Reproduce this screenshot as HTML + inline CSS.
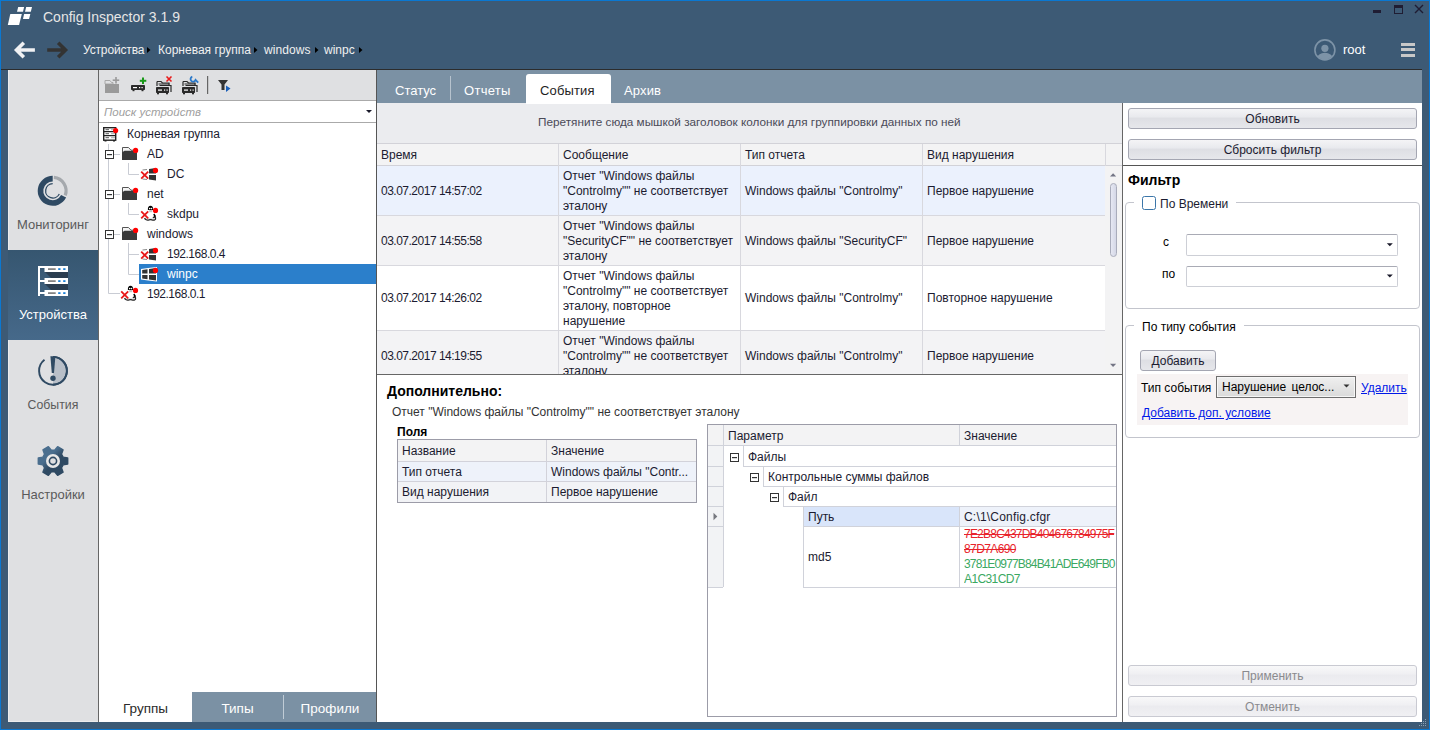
<!DOCTYPE html>
<html><head><meta charset="utf-8">
<style>
*{box-sizing:border-box;margin:0;padding:0}
html,body{width:1430px;height:730px;overflow:hidden}
body{position:relative;background:#3d5a75;font-family:"Liberation Sans",sans-serif;font-size:12px;color:#1e1e1e}
.a{position:absolute}
.t{position:absolute;white-space:nowrap;line-height:15px}
svg{position:absolute;overflow:visible}
</style></head><body>
<!-- window border -->
<div class="a" style="left:0;top:0;width:1430px;height:730px;border:1px solid #0a78d2;z-index:50"></div>

<!-- ========== TITLE BAR ========== -->
<svg style="left:0;top:0" width="40" height="30">
<polygon fill="#fff" points="7.8,25 19.1,25 21.8,14.1 10.3,14.1"/>
<polygon fill="#fff" points="23,18.9 29.1,18.9 30.3,14.1 24.1,14.1"/>
<polygon fill="#fff" points="17,11.8 23,11.8 24.1,7 18.2,7"/>
<polygon fill="#fff" points="25,11.8 30.8,11.8 32,7 26.2,7"/>
</svg>
<div class="t" style="left:43px;top:9px;font-size:14px;color:#e6e6e6;line-height:17px">Config Inspector 3.1.9</div>
<!-- window controls -->
<div class="a" style="left:1373px;top:10px;width:8px;height:3px;background:#1f1d33"></div>
<div class="a" style="left:1394px;top:5px;width:9px;height:9px;border:1px solid #1f1d33;border-top-width:3px"></div>
<svg style="left:1412px;top:3px" width="14" height="14"><path d="M3,2 L11,10 M11,2 L3,10" stroke="#1f1d33" stroke-width="1.4"/></svg>

<!-- nav arrows -->
<svg style="left:0;top:34px" width="80" height="32">
<path d="M34.9,16 H17 M23.8,8.7 L16.5,16 L23.8,23.3" fill="none" stroke="#f0f1f3" stroke-width="3.6" stroke-linejoin="miter" stroke-miterlimit="10"/>
<path d="M47.2,16 H65 M58.2,8.7 L65.5,16 L58.2,23.3" fill="none" stroke="#333" stroke-width="3.6" stroke-linejoin="miter" stroke-miterlimit="10"/>
</svg>

<!-- breadcrumb -->
<div class="t" style="left:83px;top:42px;font-size:12px;color:#f0f0f0;line-height:16px;letter-spacing:-0.15px">Устройства</div>
<div class="t" style="left:158px;top:42px;font-size:12px;color:#f0f0f0;line-height:16px">Корневая группа</div>
<div class="t" style="left:264px;top:42px;font-size:12px;color:#f0f0f0;line-height:16px;letter-spacing:0.1px">windows</div>
<div class="t" style="left:324px;top:42px;font-size:12px;color:#f0f0f0;line-height:16px">winpc</div>
<svg style="left:0;top:0" width="400" height="70"><g fill="#000">
<path d="M147,47 L150.5,50 L147,53 Z"/><path d="M254,47 L257.5,50 L254,53 Z"/><path d="M315,47 L318.5,50 L315,53 Z"/><path d="M359,47 L362.5,50 L359,53 Z"/>
</g></svg>

<!-- user -->
<svg style="left:1312px;top:37px" width="26" height="26">
<defs><clipPath id="avc"><circle cx="12.9" cy="12.9" r="9.6"/></clipPath></defs>
<circle cx="12.9" cy="12.9" r="10" fill="none" stroke="#7d93a7" stroke-width="1.6"/>
<g clip-path="url(#avc)" fill="#7d93a7"><circle cx="12.9" cy="11.3" r="3.6"/><ellipse cx="12.9" cy="21.5" rx="8" ry="5.8"/></g>
</svg>
<div class="t" style="left:1343px;top:42px;font-size:13px;color:#fff;line-height:16px">root</div>
<div class="a" style="left:1401px;top:43px;width:14px;height:3px;background:#c8c8c8"></div>
<div class="a" style="left:1401px;top:48px;width:14px;height:3px;background:#c8c8c8"></div>
<div class="a" style="left:1401px;top:54px;width:14px;height:3px;background:#c8c8c8"></div>

<div class="a" style="left:1px;top:69px;width:1421px;height:1px;background:#2c2c2c"></div>

<!-- ========== SIDEBAR ========== -->
<div class="a" style="left:8px;top:70px;width:90px;height:652px;background:#dfe0e2;border-left:1px solid #ececec;border-bottom:1px solid #ececec"></div>

<!-- monitoring icon -->
<svg style="left:0;top:0" width="100" height="520">
<g transform="translate(52.7,190.8)">
<path d="M0,-12.2 A12.2,12.2 0 1 0 10.9,5.5" fill="none" stroke="#2f4a63" stroke-width="5.6"/>
<path d="M1.2,-13.4 A13.4,13.4 0 0 1 12.5,4.6" fill="none" stroke="#a5a9ad" stroke-width="3.2"/>
<path d="M0,-7.2 A7.2,7.2 0 1 0 6.6,3.2" fill="none" stroke="#2f4a63" stroke-width="1.3"/>
</g>
<!-- events icon -->
<g transform="translate(53,370.8)">
<path d="M0,-13.9 A13.9,13.9 0 0 1 0,13.9 Z" fill="#b8bfc8"/>
<path d="M-8.5,-11 A13.9,13.9 0 1 0 0,-13.9" fill="none" stroke="#2f4a63" stroke-width="1.9"/>
<path d="M0,-13.9 A13.9,13.9 0 0 1 0,13.9" fill="none" stroke="#2f4a63" stroke-width="1.9"/>
<path d="M-2.6,-14.5 L2.4,-14.5 L1,2.2 L-1.2,2.2 Z" fill="#2f4a63"/>
<circle cx="0" cy="7.4" r="2.7" fill="#2f4a63"/>
</g>
<!-- settings icon -->
<defs><linearGradient id="gg" x1="0" y1="0" x2="1" y2="1"><stop offset="0.35" stop-color="#4a6e8e"/><stop offset="0.55" stop-color="#2f4a63"/></linearGradient></defs>
<g transform="translate(53,461)">
<path id="gear" fill="url(#gg)" d="M10.08,-3.87 L14.67,-3.12 L14.67,3.12 L10.08,3.87 L8.39,6.80 L10.04,11.15 L4.64,14.27 L1.69,10.67 L-1.69,10.67 L-4.64,14.27 L-10.04,11.15 L-8.39,6.80 L-10.08,3.87 L-14.67,3.12 L-14.67,-3.12 L-10.08,-3.87 L-8.39,-6.80 L-10.04,-11.15 L-4.64,-14.27 L-1.69,-10.67 L1.69,-10.67 L4.64,-14.27 L10.04,-11.15 L8.39,-6.80 Z" stroke="url(#gg)" stroke-width="1.5" stroke-linejoin="round"/>
<circle r="7" fill="#e8e8e8"/>
<circle r="4.4" fill="#2f4a63"/>
<circle r="2.8" fill="#dfe0e2"/>
</g>
</svg>
<div class="t" style="left:8px;top:217px;width:90px;text-align:center;font-size:13px;color:#5a5a5a;line-height:16px">Мониторинг</div>
<div class="a" style="left:8px;top:250px;width:90px;height:90px;background:linear-gradient(#365670,#46698a)"></div>
<svg style="left:0;top:0" width="100" height="300">
<rect x="38" y="266" width="2" height="30" fill="#fff"/>
<rect x="38" y="266" width="7" height="2" fill="#fff"/>
<rect x="38" y="280" width="7" height="2" fill="#fff"/>
<rect x="38" y="292" width="7" height="2" fill="#fff"/>
<polygon points="45,272 68,272 68,278 51,278" fill="#2a3d50"/>
<polygon points="45,284 68,284 68,290 51,290" fill="#2a3d50"/>
<rect x="44.5" y="266" width="23.5" height="6" fill="#fff"/>
<rect x="44.5" y="278" width="23.5" height="6" fill="#fff"/>
<rect x="44.5" y="290" width="23.5" height="6" fill="#fff"/>
<g fill="#777"><rect x="48" y="268.3" width="7.7" height="1.6"/><rect x="48" y="280.3" width="7.7" height="1.6"/><rect x="48" y="292.3" width="7.7" height="1.6"/></g>
<g fill="#1a7fd6"><rect x="58.2" y="268.2" width="2.3" height="1.8"/><rect x="63.2" y="268.2" width="2.3" height="1.8"/><rect x="58.2" y="280.2" width="2.3" height="1.8"/><rect x="63.2" y="280.2" width="2.3" height="1.8"/><rect x="58.2" y="292.2" width="2.3" height="1.8"/><rect x="63.2" y="292.2" width="2.3" height="1.8"/></g>
</svg>
<div class="t" style="left:8px;top:307px;width:90px;text-align:center;font-size:13px;color:#fff;line-height:16px">Устройства</div>
<div class="t" style="left:8px;top:397px;width:90px;text-align:center;font-size:12.3px;color:#5a5a5a;line-height:16px">События</div>
<div class="t" style="left:8px;top:487px;width:90px;text-align:center;font-size:13px;color:#5a5a5a;line-height:16px">Настройки</div>


<!-- ========== TREE PANEL ========== -->
<div class="a" style="left:98px;top:70px;width:279px;height:652px;background:#fff;border-left:1px solid #666;border-right:1px solid #555"></div>
<div class="a" style="left:99px;top:70px;width:277px;height:31px;background:#dfe0e2;border-bottom:1px solid #aaa"></div>

<!-- toolbar icons -->
<svg style="left:0;top:0" width="380" height="100">
<!-- 1 gray folder plus -->
<g fill="#9a9a9a">
<path d="M105,80.5 H110 L111.5,82.5 H113 V84 H105 Z" fill="none" stroke="#a8a8a8" stroke-width="1"/>
<rect x="105" y="84" width="14" height="9"/>
<rect x="115.2" y="77" width="1.6" height="6.5"/><rect x="112.7" y="79.4" width="6.5" height="1.6"/>
</g>
<!-- 2 device + green plus -->
<rect x="131" y="85" width="14" height="5" rx="0.8" fill="#2a2a2a"/>
<rect x="133" y="87" width="4" height="1.2" fill="#fff"/><rect x="139" y="87" width="1.2" height="1.2" fill="#fff"/><rect x="141.5" y="87" width="1.2" height="1.2" fill="#fff"/>
<rect x="132.5" y="90" width="2" height="1.2" fill="#2a2a2a"/><rect x="141.5" y="90" width="2" height="1.2" fill="#2a2a2a"/>
<rect x="142" y="77.5" width="2" height="6.5" fill="#1a9a1a"/><rect x="139.8" y="79.8" width="6.5" height="2" fill="#1a9a1a"/>
<!-- 3 folder devices red x -->
<g transform="translate(156,81)">
<path d="M1,0.5 H5 L6.5,2 H13 V4 M1,0.5 V5" fill="none" stroke="#2a2a2a" stroke-width="1.2"/>
<path d="M3.5,4.5 H15 V11 M2.5,3 H13.5" fill="none" stroke="#2a2a2a" stroke-width="1.2"/>
<rect x="0" y="6" width="13" height="6" rx="0.8" fill="#2a2a2a"/>
<rect x="2" y="8.5" width="4" height="1.2" fill="#fff"/><rect x="8" y="8.5" width="1.2" height="1.2" fill="#fff"/><rect x="10.5" y="8.5" width="1.2" height="1.2" fill="#fff"/>
<rect x="1" y="12" width="2" height="1.3" fill="#2a2a2a"/><rect x="10" y="12" width="2" height="1.3" fill="#2a2a2a"/>
</g>
<path d="M166.5,76.5 L171.5,81.5 M171.5,76.5 L166.5,81.5" stroke="#e81c1c" stroke-width="1.6"/>
<!-- 4 folder devices wrench -->
<g transform="translate(182,81)">
<path d="M1,0.5 H5 L6.5,2 H13 V4 M1,0.5 V5" fill="none" stroke="#2a2a2a" stroke-width="1.2"/>
<path d="M3.5,4.5 H15 V11 M2.5,3 H13.5" fill="none" stroke="#2a2a2a" stroke-width="1.2"/>
<rect x="0" y="6" width="13" height="6" rx="0.8" fill="#2a2a2a"/>
<rect x="2" y="8.5" width="4" height="1.2" fill="#fff"/><rect x="8" y="8.5" width="1.2" height="1.2" fill="#fff"/><rect x="10.5" y="8.5" width="1.2" height="1.2" fill="#fff"/>
<rect x="1" y="12" width="2" height="1.3" fill="#2a2a2a"/><rect x="10" y="12" width="2" height="1.3" fill="#2a2a2a"/>
</g>
<path d="M192.3,76.6 A2.6,2.6 0 1 0 195.6,79.9 L198.2,82.6" fill="none" stroke="#2a78c8" stroke-width="1.8"/>
<!-- separator -->
<rect x="207" y="76" width="1.2" height="18" fill="#666"/>
<!-- filter -->
<path d="M218,80 H228 L224.5,84.5 V90 H221.5 V84.5 Z" fill="#333"/>
<path d="M226,85.5 L230.5,88.5 L226,92 Z" fill="#1a5fb8"/>
</svg>

<!-- search -->
<div class="a" style="left:99px;top:101px;width:277px;height:22px;background:#fff;border-bottom:1px solid #aaa"></div>
<div class="t" style="left:104px;top:105px;font-size:11.5px;font-style:italic;color:#a0a0a0">Поиск устройств</div>
<svg style="left:0;top:0" width="380" height="120"><path d="M366,110 H372 L369,113 Z" fill="#1a1a2a"/></svg>

<!-- selection -->
<div class="a" style="left:139px;top:264px;width:237px;height:20px;background:#2b7fcb"></div>

<!-- tree lines & icons -->
<svg style="left:0;top:0" width="380" height="310">
<g stroke="#c9ccd4" stroke-width="1" fill="none">
<path d="M108.5,144 V293.5 H120"/>
<path d="M114,154.5 H120 M114,194.5 H120 M114,234.5 H120"/>
<path d="M128.5,163 V174.5 H139"/>
<path d="M128.5,203 V214.5 H139"/>
<path d="M128.5,243 V274.5 H139 M128.5,254.5 H139"/>
</g>
<rect x="105.5" y="150.5" width="8" height="8" fill="#fff" stroke="#333" stroke-width="1"/><rect x="107" y="154" width="5" height="1.2" fill="#333"/><rect x="105.5" y="190.5" width="8" height="8" fill="#fff" stroke="#333" stroke-width="1"/><rect x="107" y="194" width="5" height="1.2" fill="#333"/><rect x="105.5" y="230.5" width="8" height="8" fill="#fff" stroke="#333" stroke-width="1"/><rect x="107" y="234" width="5" height="1.2" fill="#333"/><g transform="translate(103,127)">
<rect x="0.7" y="0.7" width="12" height="12.5" fill="#fff" stroke="#222" stroke-width="1.4"/>
<path d="M0.7,4.7 H12.7 M0.7,8.7 H12.7" stroke="#222" stroke-width="1.2"/>
<path d="M2.5,2.7 H6 M2.5,6.7 H6 M2.5,10.7 H6" stroke="#555" stroke-width="1"/>
<path d="M8.5,2.7 H9.5 M10.5,2.7 H11.5 M8.5,6.7 H9.5 M10.5,6.7 H11.5 M8.5,10.7 H9.5 M10.5,10.7 H11.5" stroke="#555" stroke-width="1"/>
<rect x="1.5" y="13" width="2" height="1.5" fill="#222"/><rect x="10" y="13" width="2" height="1.5" fill="#222"/>
<circle cx="12.6" cy="3.6" r="2.6" fill="#f00"/>
</g><g transform="translate(122,147)">
<path d="M0.5,0.5 H6.5 L9,3.2 H14.5 V12.5 H0.5 Z" fill="#f4f4f4" stroke="#555" stroke-width="1"/>
<path d="M2.5,3.8 H15 V13 H0 V5.5 Z" fill="#3a3a3a"/>
<circle cx="13.6" cy="3.4" r="2.6" fill="#f00"/>
</g><g transform="translate(122,187)">
<path d="M0.5,0.5 H6.5 L9,3.2 H14.5 V12.5 H0.5 Z" fill="#f4f4f4" stroke="#555" stroke-width="1"/>
<path d="M2.5,3.8 H15 V13 H0 V5.5 Z" fill="#3a3a3a"/>
<circle cx="13.6" cy="3.4" r="2.6" fill="#f00"/>
</g><g transform="translate(122,227)">
<path d="M0.5,0.5 H6.5 L9,3.2 H14.5 V12.5 H0.5 Z" fill="#f4f4f4" stroke="#555" stroke-width="1"/>
<path d="M2.5,3.8 H15 V13 H0 V5.5 Z" fill="#3a3a3a"/>
<circle cx="13.6" cy="3.4" r="2.6" fill="#f00"/>
</g><g transform="translate(141,167)"><path d="M1.5,3 L6,2.5 M1.5,12 L6,12.5" stroke="#888" stroke-width="1"/><path d="M8,2 L15,1 V6.5 H8 Z M8,8 H15 V13.5 L8,12.6 Z" fill="#333"/><circle cx="14.5" cy="3.4" r="2.6" fill="#f00"/><path d="M0.2,4.6 L7.2,11.6 M7.2,4.6 L0.2,11.6" stroke="#e81818" stroke-width="1.8"/></g><g transform="translate(141,206)">
<path d="M6.9,4 C6.6,1 7.9,-0.2 9.5,-0.2 C11.1,-0.2 12.4,1 12.1,4 Z" fill="#000"/>
<circle cx="8.7" cy="2.6" r="0.8" fill="#fff"/><circle cx="10.5" cy="2.6" r="0.8" fill="#fff"/>
<rect x="8.2" y="4" width="3" height="2.2" fill="#c4c4c4"/>
<path d="M12.8,8 C13.8,9 14,10.3 13.6,11.2" stroke="#000" stroke-width="1.7" fill="none"/>
<path d="M3.6,12 C4,13.8 6,14.4 8,13.9 C9.2,13.5 10,13.5 11,13.9 C13,14.6 15,14 14.6,12 C14.2,10.6 12.6,11 12,12" stroke="#222" stroke-width="1.2" fill="#e4e4e4"/>
<circle cx="14.5" cy="4.4" r="2.6" fill="#f00"/>
<path d="M0.2,5.4 L7.2,12.4 M7.2,5.4 L0.2,12.4" stroke="#e81818" stroke-width="1.8"/>
</g><g transform="translate(141,247)"><path d="M1.5,3 L6,2.5 M1.5,12 L6,12.5" stroke="#888" stroke-width="1"/><path d="M8,2 L15,1 V6.5 H8 Z M8,8 H15 V13.5 L8,12.6 Z" fill="#333"/><circle cx="14.5" cy="3.4" r="2.6" fill="#f00"/><path d="M0.2,4.6 L7.2,11.6 M7.2,4.6 L0.2,11.6" stroke="#e81818" stroke-width="1.8"/></g><g transform="translate(141,267)"><path d="M0,2 L7,1 L16,0 V14.5 L7,13.5 L0,12.5 Z" fill="#fff"/><path d="M1.2,3 L6.5,2.2 V6.5 H1.2 Z M1.2,8 H6.5 V12.3 L1.2,11.6 Z" fill="#333"/><path d="M8,2 L15,1 V6.5 H8 Z M8,8 H15 V13.5 L8,12.6 Z" fill="#333"/><circle cx="14.5" cy="3.4" r="2.6" fill="#f00"/></g><g transform="translate(121,286)">
<path d="M6.9,4 C6.6,1 7.9,-0.2 9.5,-0.2 C11.1,-0.2 12.4,1 12.1,4 Z" fill="#000"/>
<circle cx="8.7" cy="2.6" r="0.8" fill="#fff"/><circle cx="10.5" cy="2.6" r="0.8" fill="#fff"/>
<rect x="8.2" y="4" width="3" height="2.2" fill="#c4c4c4"/>
<path d="M12.8,8 C13.8,9 14,10.3 13.6,11.2" stroke="#000" stroke-width="1.7" fill="none"/>
<path d="M3.6,12 C4,13.8 6,14.4 8,13.9 C9.2,13.5 10,13.5 11,13.9 C13,14.6 15,14 14.6,12 C14.2,10.6 12.6,11 12,12" stroke="#222" stroke-width="1.2" fill="#e4e4e4"/>
<circle cx="14.5" cy="4.4" r="2.6" fill="#f00"/>
<path d="M0.2,5.4 L7.2,12.4 M7.2,5.4 L0.2,12.4" stroke="#e81818" stroke-width="1.8"/>
</g>
</svg>
<div class="t" style="left:127px;top:127px;color:#1b1b30">Корневая группа</div>
<div class="t" style="left:147px;top:147px;color:#1b1b30">AD</div>
<div class="t" style="left:167px;top:167px;color:#1b1b30">DC</div>
<div class="t" style="left:147px;top:187px;color:#1b1b30">net</div>
<div class="t" style="left:167px;top:207px;color:#1b1b30">skdpu</div>
<div class="t" style="left:147px;top:227px;color:#1b1b30">windows</div>
<div class="t" style="left:167px;top:247px;color:#1b1b30;letter-spacing:-0.5px">192.168.0.4</div>
<div class="t" style="left:167px;top:267px;color:#fff">winpc</div>
<div class="t" style="left:147px;top:287px;color:#1b1b30;letter-spacing:-0.5px">192.168.0.1</div>

<!-- bottom tabs -->
<div class="a" style="left:192px;top:692px;width:184px;height:30px;background:#7b91a4"></div>
<div class="a" style="left:283px;top:695px;width:1px;height:24px;background:#c0ccd6"></div>
<div class="t" style="left:99px;top:700px;width:93px;text-align:center;font-size:13.5px;color:#2a2a2a;line-height:17px">Группы</div>
<div class="t" style="left:192px;top:700px;width:91px;text-align:center;font-size:13.5px;color:#fff;line-height:17px">Типы</div>
<div class="t" style="left:284px;top:700px;width:92px;text-align:center;font-size:13.5px;color:#fff;line-height:17px">Профили</div>


<!-- ========== MAIN ========== -->
<div class="a" style="left:377px;top:70px;width:1045px;height:33px;background:#7b91a4"></div>
<div class="a" style="left:377px;top:103px;width:746px;height:619px;background:#fff"></div>
<div class="a" style="left:377px;top:103px;width:746px;height:41px;background:#ebecef"></div>

<!-- tabs -->
<div class="a" style="left:450px;top:76px;width:1px;height:24px;background:#b7c3ce"></div>
<div class="a" style="left:526px;top:74px;width:85px;height:30px;background:#fff;border-radius:3px 3px 0 0"></div>
<div class="t" style="left:395px;top:83px;font-size:13px;color:#fff;line-height:16px">Статус</div>
<div class="t" style="left:464px;top:83px;font-size:13px;color:#fff;line-height:16px;letter-spacing:0.3px">Отчеты</div>
<div class="t" style="left:540px;top:83px;font-size:13px;color:#1e1e1e;line-height:16px;letter-spacing:0.15px">События</div>
<div class="t" style="left:624px;top:83px;font-size:13px;color:#fff;line-height:16px;letter-spacing:0.15px">Архив</div>

<!-- group panel text -->
<div class="t" style="left:538px;top:114px;font-size:11.75px;color:#4a4a58">Перетяните сюда мышкой заголовок колонки для группировки данных по ней</div>

<!-- grid header -->
<div class="a" style="left:377px;top:143px;width:745px;height:23px;background:#f3f3f4;border-top:1px solid #d2d2d8;border-bottom:1px solid #d2d2d8"></div>
<div class="t" style="left:381px;top:148px;color:#1b1b30">Время</div>
<div class="t" style="left:563px;top:148px;color:#1b1b30">Сообщение</div>
<div class="t" style="left:745px;top:148px;color:#1b1b30">Тип отчета</div>
<div class="t" style="left:927px;top:148px;color:#1b1b30">Вид нарушения</div>

<!-- rows -->
<div class="a" style="left:377px;top:166px;width:728px;height:49px;background:#ebf1fd"></div>
<div class="a" style="left:377px;top:215px;width:728px;height:1px;background:#d8d8de"></div>
<div class="a" style="left:377px;top:216px;width:728px;height:49px;background:#f3f3f5"></div>
<div class="a" style="left:377px;top:265px;width:728px;height:1px;background:#d8d8de"></div>
<div class="a" style="left:377px;top:266px;width:728px;height:64px;background:#fff"></div>
<div class="a" style="left:377px;top:330px;width:728px;height:1px;background:#d8d8de"></div>
<div class="a" style="left:377px;top:331px;width:728px;height:43px;background:#f3f3f5"></div>
<!-- column lines -->
<div class="a" style="left:558px;top:144px;width:1px;height:230px;background:#d8d8de"></div>
<div class="a" style="left:740px;top:144px;width:1px;height:230px;background:#d8d8de"></div>
<div class="a" style="left:922px;top:144px;width:1px;height:230px;background:#d8d8de"></div>
<div class="a" style="left:1105px;top:144px;width:1px;height:22px;background:#d8d8de"></div>
<!-- scrollbar -->
<div class="a" style="left:1105px;top:166px;width:17px;height:208px;background:#f3f3f4"></div>
<svg style="left:0;top:0" width="1130" height="380">
<path d="M1110,176.5 H1116.2 L1113.1,173.2 Z" fill="#737585"/>
<path d="M1110,363.8 H1116.2 L1113.1,367 Z" fill="#737585"/>
</svg>
<div class="a" style="left:1110px;top:183px;width:7px;height:74px;border-radius:3.5px;background:linear-gradient(90deg,#e6e8f3,#d4d7e6);border:1px solid #a9acbb"></div>

<div class="a" style="left:377px;top:166px;width:728px;height:208px;overflow:hidden">
<div class="t" style="left:4px;top:18px;color:#1b1b30;letter-spacing:-0.5px">03.07.2017 14:57:02</div>
<div class="t" style="left:186px;top:3px;color:#1b1b30;line-height:15px">Отчет "Windows файлы<br>"Controlmy"" не соответствует<br>эталону</div>
<div class="t" style="left:368px;top:18px;color:#1b1b30">Windows файлы "Controlmy"</div>
<div class="t" style="left:550px;top:18px;color:#1b1b30">Первое нарушение</div>

<div class="t" style="left:4px;top:68px;color:#1b1b30;letter-spacing:-0.5px">03.07.2017 14:55:58</div>
<div class="t" style="left:186px;top:53px;color:#1b1b30;line-height:15px">Отчет "Windows файлы<br>"SecurityCF"" не соответствует<br>эталону</div>
<div class="t" style="left:368px;top:68px;color:#1b1b30">Windows файлы "SecurityCF"</div>
<div class="t" style="left:550px;top:68px;color:#1b1b30">Первое нарушение</div>

<div class="t" style="left:4px;top:125px;color:#1b1b30;letter-spacing:-0.5px">03.07.2017 14:26:02</div>
<div class="t" style="left:186px;top:103px;color:#1b1b30;line-height:15px">Отчет "Windows файлы<br>"Controlmy"" не соответствует<br>эталону, повторное<br>нарушение</div>
<div class="t" style="left:368px;top:125px;color:#1b1b30">Windows файлы "Controlmy"</div>
<div class="t" style="left:550px;top:125px;color:#1b1b30">Повторное нарушение</div>

<div class="t" style="left:4px;top:183px;color:#1b1b30;letter-spacing:-0.5px">03.07.2017 14:19:55</div>
<div class="t" style="left:186px;top:168px;color:#1b1b30;line-height:15px">Отчет "Windows файлы<br>"Controlmy"" не соответствует<br>эталону</div>
<div class="t" style="left:368px;top:183px;color:#1b1b30">Windows файлы "Controlmy"</div>
<div class="t" style="left:550px;top:183px;color:#1b1b30">Первое нарушение</div>
</div>
<div class="a" style="left:377px;top:374px;width:745px;height:1px;background:#666"></div>

<div class="t" style="left:387px;top:383px;font-size:14px;font-weight:bold;color:#000;line-height:17px">Дополнительно:</div>
<div class="t" style="left:392px;top:405px;color:#333">Отчет "Windows файлы "Controlmy"" не соответствует эталону</div>
<div class="t" style="left:397px;top:425px;font-weight:bold;color:#000">Поля</div>

<!-- fields table -->
<div class="a" style="left:397px;top:439px;width:300px;height:64px;border:1px solid #9c9ca8;background:#f2f3f6"></div>
<div class="a" style="left:398px;top:440px;width:298px;height:21px;background:#f3f3f4"></div>
<div class="a" style="left:398px;top:461px;width:298px;height:1px;background:#d2d2da"></div>
<div class="a" style="left:398px;top:462px;width:298px;height:19px;background:#eef2fa"></div>
<div class="a" style="left:398px;top:481px;width:298px;height:1px;background:#d2d2da"></div>
<div class="a" style="left:546px;top:440px;width:1px;height:62px;background:#d2d2da"></div>
<div class="t" style="left:402px;top:444px;color:#1b1b30">Название</div>
<div class="t" style="left:551px;top:444px;color:#1b1b30">Значение</div>
<div class="t" style="left:402px;top:465px;color:#1b1b30">Тип отчета</div>
<div class="t" style="left:551px;top:465px;color:#1b1b30">Windows файлы "Contr...</div>
<div class="t" style="left:402px;top:485px;color:#1b1b30">Вид нарушения</div>
<div class="t" style="left:551px;top:485px;color:#1b1b30">Первое нарушение</div>

<!-- tree grid -->
<div class="a" style="left:707px;top:424px;width:410px;height:293px;border:1px solid #9c9ca8;background:#fff"></div>
<div class="a" style="left:708px;top:425px;width:408px;height:21px;background:#f3f3f4;border-bottom:1px solid #d0d2da"></div>
<div class="a" style="left:708px;top:446px;width:15px;height:141px;background:#f2f3f5"></div>
<div class="a" style="left:803px;top:507px;width:156px;height:19px;background:#d9e5fa"></div>
<div class="a" style="left:960px;top:507px;width:156px;height:19px;background:#eef2fa"></div>
<svg style="left:0;top:0" width="1130" height="600">
<g fill="#d0d2da">
<rect x="723" y="425" width="1" height="162"/>
<rect x="959" y="425" width="1" height="21"/>
<rect x="708" y="466" width="15" height="1"/><rect x="708" y="486" width="15" height="1"/><rect x="708" y="506" width="15" height="1"/><rect x="708" y="526" width="15" height="1"/><rect x="708" y="587" width="15" height="1"/>
<rect x="743" y="446" width="1" height="20"/><rect x="743" y="466" width="373" height="1"/>
<rect x="763" y="467" width="1" height="19"/><rect x="763" y="486" width="353" height="1"/>
<rect x="783" y="487" width="1" height="19"/><rect x="783" y="506" width="333" height="1"/>
<rect x="803" y="507" width="1" height="80"/><rect x="803" y="526" width="313" height="1"/><rect x="803" y="587" width="313" height="1"/>
<rect x="959" y="507" width="1" height="80"/>
</g>
<path d="M713.5,512.8 L717.3,516.5 L713.5,520.2 Z" fill="#76787f"/>
<rect x="730.5" y="453.5" width="8" height="8" fill="#fff" stroke="#333" stroke-width="1"/><rect x="732" y="457" width="5" height="1.2" fill="#333"/><rect x="750.5" y="473.5" width="8" height="8" fill="#fff" stroke="#333" stroke-width="1"/><rect x="752" y="477" width="5" height="1.2" fill="#333"/><rect x="770.5" y="493.5" width="8" height="8" fill="#fff" stroke="#333" stroke-width="1"/><rect x="772" y="497" width="5" height="1.2" fill="#333"/>
</svg>
<div class="t" style="left:728px;top:429px;color:#1b1b30">Параметр</div>
<div class="t" style="left:964px;top:429px;color:#1b1b30">Значение</div>
<div class="t" style="left:748px;top:450px;color:#1b1b30">Файлы</div>
<div class="t" style="left:768px;top:470px;color:#1b1b30">Контрольные суммы файлов</div>
<div class="t" style="left:788px;top:490px;color:#1b1b30">Файл</div>
<div class="t" style="left:808px;top:510px;color:#1b1b30">Путь</div>
<div class="t" style="left:964px;top:510px;color:#1b1b30;letter-spacing:0.2px">C:\1\Config.cfgr</div>
<div class="t" style="left:808px;top:550px;color:#1b1b30">md5</div>
<div class="a" style="left:964px;top:527px;width:152px;height:60px;overflow:hidden">
<div class="t" style="left:0;top:0;color:#e8232b;letter-spacing:-0.78px;text-decoration:line-through">7E2B8C437DB404676784975F</div>
<div class="t" style="left:0;top:15px;color:#e8232b;letter-spacing:-0.6px;text-decoration:line-through">87D7A690</div>
<div class="t" style="left:0;top:30px;color:#3aa862;letter-spacing:-0.84px">3781E0977B84B41ADE649FB0</div>
<div class="t" style="left:0;top:45px;color:#3aa862;letter-spacing:-0.6px">A1C31CD7</div>
</div>



<!-- ========== RIGHT ========== -->
<div class="a" style="left:1122px;top:103px;width:300px;height:619px;background:#fff;border-left:1px solid #666"></div>

<div class="a" style="left:1128px;top:108px;width:289px;height:21px;background:linear-gradient(#f4f4f6 0%,#e9eaee 40%,#dedfe4 50%,#e6e7eb 100%);border:1px solid #a4a6b2;border-radius:3px"></div>
<div class="t" style="left:1128px;top:112px;width:289px;text-align:center;color:#1b1b30">Обновить</div>
<div class="a" style="left:1128px;top:139px;width:289px;height:21px;background:linear-gradient(#f4f4f6 0%,#e9eaee 40%,#dedfe4 50%,#e6e7eb 100%);border:1px solid #a4a6b2;border-radius:3px"></div>
<div class="t" style="left:1128px;top:143px;width:289px;text-align:center;color:#1b1b30">Сбросить фильтр</div>
<div class="a" style="left:1123px;top:165px;width:299px;height:1px;background:#555"></div>
<div class="t" style="left:1128px;top:172px;font-size:14px;font-weight:bold;color:#000;line-height:17px">Фильтр</div>

<!-- group 1 -->
<div class="a" style="left:1125px;top:202px;width:295px;height:107px;border:1px solid #c3c5cd;border-radius:4px"></div>
<div class="a" style="left:1134px;top:200px;width:102px;height:5px;background:#fff"></div>
<div class="a" style="left:1142px;top:196px;width:14px;height:14px;border:1.5px solid #3b76a9;border-radius:2.5px;background:#fff"></div>
<div class="t" style="left:1160px;top:197px;color:#1b1b30">По Времени</div>
<div class="t" style="left:1163px;top:235px;color:#000">с</div>
<div class="t" style="left:1162px;top:267px;color:#000">по</div>
<div class="a" style="left:1186px;top:234px;width:212px;height:22px;border:1px solid #cdcfd6;border-top-color:#a9abb5;border-radius:2px;background:#fff"></div>
<div class="a" style="left:1186px;top:266px;width:212px;height:21px;border:1px solid #cdcfd6;border-top-color:#a9abb5;border-radius:2px;background:#fff"></div>
<svg style="left:0;top:0" width="1430" height="300">
<path d="M1386.8,243.2 H1392.8 L1389.8,246.3 Z" fill="#1a1a2a"/>
<path d="M1386.8,274.4 H1392.8 L1389.8,277.5 Z" fill="#1a1a2a"/>
</svg>

<!-- group 2 -->
<div class="a" style="left:1125px;top:325px;width:295px;height:113px;border:1px solid #c3c5cd;border-radius:4px"></div>
<div class="a" style="left:1134px;top:323px;width:110px;height:5px;background:#fff"></div>
<div class="t" style="left:1142px;top:320px;color:#000">По типу события</div>
<div class="a" style="left:1140px;top:350px;width:76px;height:21px;background:linear-gradient(#f4f4f6 0%,#e9eaee 40%,#dedfe4 50%,#e6e7eb 100%);border:1px solid #a4a6b2;border-radius:3px"></div>
<div class="t" style="left:1140px;top:354px;width:76px;text-align:center;color:#1b1b30">Добавить</div>
<div class="a" style="left:1137px;top:374px;width:271px;height:51px;background:#f7f3f3"></div>
<div class="t" style="left:1141px;top:381px;color:#000">Тип события</div>
<div class="a" style="left:1216px;top:376px;width:140px;height:22px;border:1px solid #6e6e6e;background:linear-gradient(#efefef,#dadada);box-shadow:inset 0 0 0 1px #f6f6f6"></div>
<div class="t" style="left:1222px;top:380px;color:#000;word-spacing:2px">Нарушение целос...</div>
<svg style="left:0;top:0" width="1430" height="400"><path d="M1343.5,384.5 H1349.5 L1346.5,387.6 Z" fill="#333"/></svg>
<div class="t" style="left:1361px;top:381px;color:#0018e8;text-decoration:underline">Удалить</div>
<div class="t" style="left:1142px;top:406px;color:#0018e8;text-decoration:underline">Добавить доп. условие</div>

<!-- bottom buttons -->
<div class="a" style="left:1128px;top:665px;width:289px;height:21px;background:linear-gradient(#f8f8f9 0%,#f0f0f3 40%,#ebebef 50%,#f0f0f3 100%);border:1px solid #c9cad2;border-radius:3px"></div>
<div class="t" style="left:1128px;top:669px;width:289px;text-align:center;color:#8a8a8e">Применить</div>
<div class="a" style="left:1128px;top:696px;width:289px;height:21px;background:linear-gradient(#f8f8f9 0%,#f0f0f3 40%,#ebebef 50%,#f0f0f3 100%);border:1px solid #c9cad2;border-radius:3px"></div>
<div class="t" style="left:1128px;top:700px;width:289px;text-align:center;color:#8a8a8e">Отменить</div>
<!-- grip -->
<svg style="left:0;top:0" width="1430" height="730"><g fill="#8aa0b4">
<rect x="1425" y="719" width="1" height="1"/><rect x="1423" y="721" width="1" height="1"/><rect x="1425" y="721" width="1" height="1"/>
<rect x="1421" y="723" width="1" height="1"/><rect x="1423" y="723" width="1" height="1"/><rect x="1425" y="723" width="1" height="1"/>
<rect x="1419" y="725" width="1" height="1"/><rect x="1421" y="725" width="1" height="1"/><rect x="1423" y="725" width="1" height="1"/><rect x="1425" y="725" width="1" height="1"/>
</g></svg>

</body></html>
